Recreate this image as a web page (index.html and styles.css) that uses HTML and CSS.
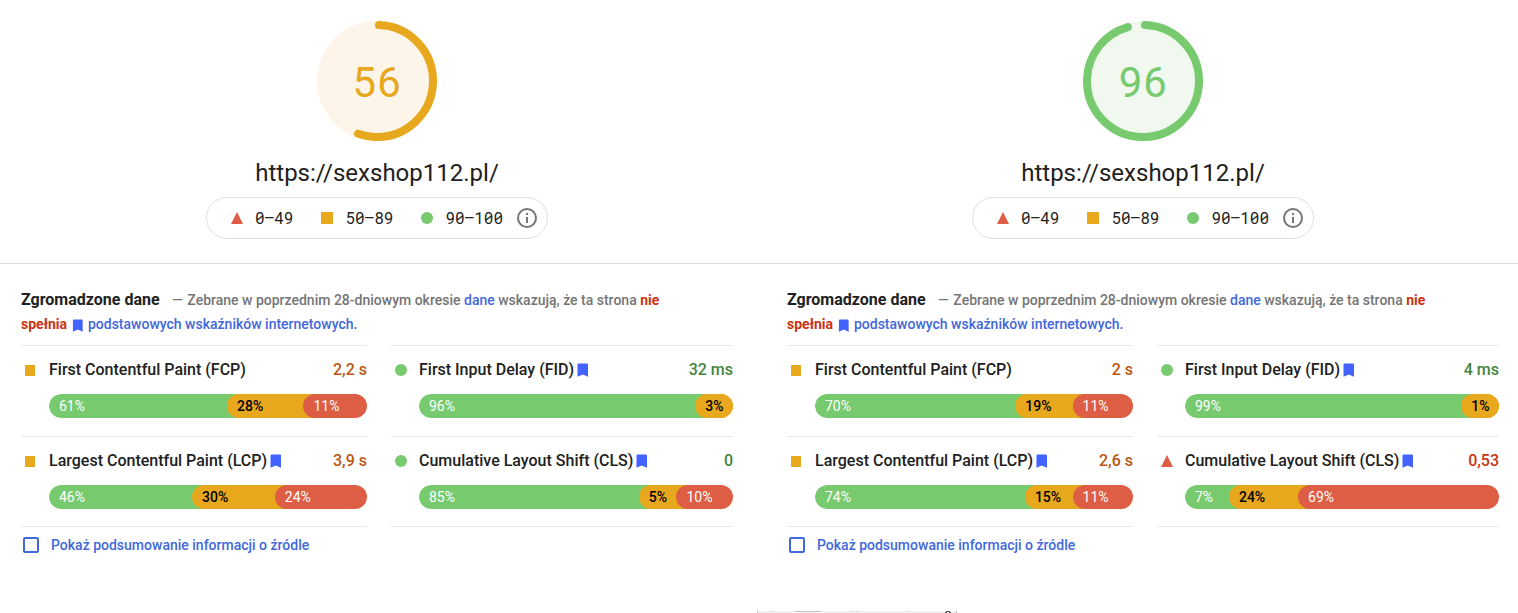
FILE: index.html
```html
<!DOCTYPE html>
<html lang="pl">
<head>
  <meta charset="UTF-8" />
  <meta name="viewport" content="width=device-width, initial-scale=1" />
  <title>https://sexshop112.pl/</title>
  <link rel="stylesheet" href="styles.css">
</head>
<body>

  <svg width="0" height="0" class="defs" aria-hidden="true">
    <symbol id="bookmark" viewBox="0 0 12 14">
      <path d="M1.5 0.5h8.500a1 1 0 0 1 1 1v12.200l-5.250-2.300-5.250 2.300v-12.200a1 1 0 0 1 1-1z" fill="#4263ff" />
    </symbol>
    <symbol id="triangle" viewBox="0 0 12 12">
      <path d="M6 0l6 12H0z" fill="#dd5e44" />
    </symbol>
    <symbol id="info" viewBox="0 0 20 20">
      <circle cx="10" cy="10" r="9" fill="none" stroke="#757575" stroke-width="2" />
      <path d="M9 5h2v2H9zM9 9h2v6H9z" fill="#757575" />
    </symbol>
  </svg>

  <header class="scores">
    <div class="score">
      <div class="gauge average">
        <svg viewBox="0 0 120 120" aria-hidden="true">
          <circle class="gauge-base" cx="60" cy="60" r="60" />
          <circle class="gauge-arc" cx="60" cy="60" r="56" stroke-dasharray="193 352" transform="rotate(-88 60 60)" />
        </svg>
        <span class="gauge-value">56</span>
      </div>
      <h1 class="url">https://sexshop112.pl/</h1>
      <div class="legend">
        <span class="range"><svg class="marker"><use href="#triangle" /></svg>0–49</span>
        <span class="range"><i class="marker square"></i>50–89</span>
        <span class="range"><i class="marker circle"></i>90–100</span>
        <button class="info" aria-label="Info"><svg><use href="#info" /></svg></button>
      </div>
    </div>

    <div class="score">
      <div class="gauge pass">
        <svg viewBox="0 0 120 120" aria-hidden="true">
          <circle class="gauge-base" cx="60" cy="60" r="60" />
          <circle class="gauge-arc" cx="60" cy="60" r="56" stroke-dasharray="334 352" transform="rotate(-88 60 60)" />
        </svg>
        <span class="gauge-value">96</span>
      </div>
      <h1 class="url">https://sexshop112.pl/</h1>
      <div class="legend">
        <span class="range"><svg class="marker"><use href="#triangle" /></svg>0–49</span>
        <span class="range"><i class="marker square"></i>50–89</span>
        <span class="range"><i class="marker circle"></i>90–100</span>
        <button class="info" aria-label="Info"><svg><use href="#info" /></svg></button>
      </div>
    </div>
  </header>

  <main class="reports">
    <section class="report">
      <p class="summary">
        <strong class="heading">Zgromadzone dane</strong>
        <span class="dash">—</span> Zebrane w poprzednim 28-dniowym okresie <a href="#">dane</a> wskazują, że ta strona <b>nie spełnia</b>
        <svg class="bookmark"><use href="#bookmark" /></svg> <a href="#">podstawowych wskaźników internetowych.</a>
      </p>

      <div class="metrics">
        <div class="metric">
          <i class="icon square"></i>
          <span class="name">First Contentful Paint (FCP)</span>
          <span class="value average">2,2 s</span>
          <div class="bar">
            <span class="good" style="width: 56%">61%</span>
            <span class="medium" style="width: 24%">28%</span>
            <span class="poor" style="width: 20%">11%</span>
          </div>
        </div>
        <div class="metric">
          <i class="icon circle"></i>
          <span class="name">First Input Delay (FID)<svg class="bookmark"><use href="#bookmark" /></svg></span>
          <span class="value pass">32 ms</span>
          <div class="bar">
            <span class="good" style="width: 88%">96%</span>
            <span class="medium" style="width: 12%">3%</span>
          </div>
        </div>
        <div class="metric">
          <i class="icon square"></i>
          <span class="name">Largest Contentful Paint (LCP)<svg class="bookmark"><use href="#bookmark" /></svg></span>
          <span class="value average">3,9 s</span>
          <div class="bar">
            <span class="good" style="width: 45%">46%</span>
            <span class="medium" style="width: 26%">30%</span>
            <span class="poor" style="width: 29%">24%</span>
          </div>
        </div>
        <div class="metric">
          <i class="icon circle"></i>
          <span class="name">Cumulative Layout Shift (CLS)<svg class="bookmark"><use href="#bookmark" /></svg></span>
          <span class="value pass">0</span>
          <div class="bar">
            <span class="good" style="width: 70%">85%</span>
            <span class="medium" style="width: 12%">5%</span>
            <span class="poor" style="width: 18%">10%</span>
          </div>
        </div>
      </div>

      <label class="origin" for="origin-mobile">
        <input type="checkbox" id="origin-mobile" />
        Pokaż podsumowanie informacji o źródle
      </label>
    </section>

    <section class="report">
      <p class="summary">
        <strong class="heading">Zgromadzone dane</strong>
        <span class="dash">—</span> Zebrane w poprzednim 28-dniowym okresie <a href="#">dane</a> wskazują, że ta strona <b>nie spełnia</b>
        <svg class="bookmark"><use href="#bookmark" /></svg> <a href="#">podstawowych wskaźników internetowych.</a>
      </p>

      <div class="metrics">
        <div class="metric">
          <i class="icon square"></i>
          <span class="name">First Contentful Paint (FCP)</span>
          <span class="value average">2 s</span>
          <div class="bar">
            <span class="good" style="width: 63%">70%</span>
            <span class="medium" style="width: 18%">19%</span>
            <span class="poor" style="width: 19%">11%</span>
          </div>
        </div>
        <div class="metric">
          <i class="icon circle"></i>
          <span class="name">First Input Delay (FID)<svg class="bookmark"><use href="#bookmark" /></svg></span>
          <span class="value pass">4 ms</span>
          <div class="bar">
            <span class="good" style="width: 88%">99%</span>
            <span class="medium" style="width: 12%">1%</span>
          </div>
        </div>
        <div class="metric">
          <i class="icon square"></i>
          <span class="name">Largest Contentful Paint (LCP)<svg class="bookmark"><use href="#bookmark" /></svg></span>
          <span class="value average">2,6 s</span>
          <div class="bar">
            <span class="good" style="width: 66%">74%</span>
            <span class="medium" style="width: 15%">15%</span>
            <span class="poor" style="width: 19%">11%</span>
          </div>
        </div>
        <div class="metric">
          <svg class="icon"><use href="#triangle" /></svg>
          <span class="name">Cumulative Layout Shift (CLS)<svg class="bookmark"><use href="#bookmark" /></svg></span>
          <span class="value fail">0,53</span>
          <div class="bar">
            <span class="good" style="width: 14%">7%</span>
            <span class="medium" style="width: 22%">24%</span>
            <span class="poor" style="width: 64%">69%</span>
          </div>
        </div>
      </div>

      <label class="origin" for="origin-desktop">
        <input type="checkbox" id="origin-desktop" />
        Pokaż podsumowanie informacji o źródle
      </label>
    </section>
  </main>

  <svg class="filmstrip" viewBox="0 0 200 2" aria-hidden="true">
    <path d="M0 0h200v2H0z" fill="#f1f1f1" />
    <path d="M0 0h1v2H0zM38 0h26v1H38zM199 0h1v2h-1z" fill="#c4c4c4" />
    <path d="M14 0h3v1h-3zM94 0h3v1h-3zM99 0h3v1h-3zM150 0h2v1h-2z" fill="#dddddd" />
    <path d="M189 0h4v1h-4zM188 1h2v1h-2zM192 1h2v1h-2z" fill="#555555" />
  </svg>

</body>
</html>
```

FILE: styles.css
```css
* {
  box-sizing: border-box;
}
body {
  margin: 0;
  min-height: 100vh;
  display: flex;
  flex-direction: column;
  font-family: Roboto, "Liberation Sans", sans-serif;
  font-size: 16px;
  line-height: 24px;
  color: #212121;
  background: white;
}
.defs {
  position: absolute;
}
a {
  color: #4268db;
  text-decoration: none;
}

/* scores */
.scores, .reports {
  display: grid;
  grid-template-columns: 1fr 1fr;
  column-gap: 14px;
}
.scores {
  border-bottom: 1px solid #e0e0e0;
}
.score {
  display: flex;
  flex-direction: column;
  align-items: center;
  padding: 21px 19px 24px 21px;
}
.gauge {
  display: grid;
  place-items: center;
  width: 120px;
  height: 120px;
}
.gauge svg, .gauge-value {
  grid-area: 1 / 1;
}
.gauge-value {
  font-family: "Roboto Mono", Roboto, sans-serif;
  font-size: 42px;
  line-height: 48px;
}
.gauge-arc {
  fill: none;
  stroke: currentColor;
  stroke-width: 8;
  stroke-linecap: round;
}
.gauge.average {
  color: #e8a81e;
}
.gauge.average .gauge-base {
  fill: #fef5ea;
}
.gauge.pass {
  color: #78ca6f;
}
.gauge.pass .gauge-base {
  fill: #f1f8f0;
}
.url {
  margin: 16px 0 8px;
  font-size: 24px;
  font-weight: 400;
  line-height: 32px;
}
.legend {
  display: flex;
  align-items: center;
  gap: 28px;
  height: 42px;
  padding: 0 10px 0 24px;
  border: 1px solid #e0e0e0;
  border-radius: 21px;
  font-family: "Roboto Mono", "Liberation Mono", monospace;
}
.range {
  display: flex;
  align-items: center;
  gap: 12px;
}
.marker {
  width: 12px;
  height: 12px;
}
.square {
  background: #e8a81e;
}
.circle {
  background: #78ca6f;
  border-radius: 50%;
}
.info {
  width: 20px;
  height: 20px;
  margin-left: -14px;
  padding: 0;
  border: 0;
  background: none;
}
.info svg {
  display: block;
  width: 20px;
  height: 20px;
}

/* field data */
.report {
  padding: 24px 19px 0 21px;
}
.summary {
  margin: 0 0 9px;
  padding-right: 48px;
  font-size: 14px;
  font-weight: 500;
  color: #757575;
}
.summary b {
  color: #cc3311;
  font-weight: 700;
}
.heading {
  margin-right: 9px;
  font-size: 16px;
  color: #212121;
}
.dash {
  margin-right: 1px;
}
.bookmark {
  width: 12px;
  height: 14px;
  margin-left: 3px;
  vertical-align: -2px;
}
.summary .bookmark {
  height: 13px;
  margin-left: 2px;
  vertical-align: -3px;
}
.metrics {
  display: grid;
  grid-template-columns: 173fr 171fr;
  column-gap: 24px;
  border-bottom: 1px solid transparent;
}
.metric {
  display: grid;
  grid-template-columns: 24px 1fr auto;
  column-gap: 4px;
  align-items: center;
  padding: 12px 0 18px;
  border-top: 1px solid #e8e8e8;
}
.metric:nth-child(n+3) {
  margin-bottom: -1px;
  padding-bottom: 17px;
  border-bottom: 1px solid #e8e8e8;
}
.icon {
  width: 12px;
  height: 12px;
  margin-left: 4px;
}
.icon.square {
  width: 10px;
  height: 11px;
}
.name, .value {
  font-weight: 500;
}
.value.average {
  color: #b9560f;
}
.value.pass {
  color: #44853d;
}
.value.fail {
  color: #cc3311;
}
.bar {
  grid-column: 2 / -1;
  display: flex;
  height: 24px;
  margin-top: 12px;
  border-radius: 12px;
  overflow: hidden;
  font-size: 14px;
}
/* the shadow fills the space behind the next segment's rounded edge */
.bar span {
  padding-left: 10px;
  border-radius: 12px 0 0 12px;
}
.bar .good {
  color: white;
  background: #78ca6f;
  box-shadow: 12px 0 0 #78ca6f;
}
.bar .medium {
  color: black;
  font-weight: 500;
  background: #e8a81e;
  box-shadow: 12px 0 0 #e8a81e;
}
.bar .poor {
  color: white;
  background: #dd5e44;
}
.origin {
  display: inline-flex;
  align-items: center;
  gap: 12px;
  margin-top: 6px;
  padding-left: 2px;
  font-size: 14px;
  font-weight: 500;
  color: #4268db;
}
.origin input {
  appearance: none;
  width: 16px;
  height: 16px;
  margin: 0;
  border: 2px solid #4268db;
  border-radius: 2px;
}
.origin input:checked {
  background: #4268db;
}

.filmstrip {
  width: 200px;
  height: 2px;
  margin: auto 0 0 calc(50% - 2px);
}
```
